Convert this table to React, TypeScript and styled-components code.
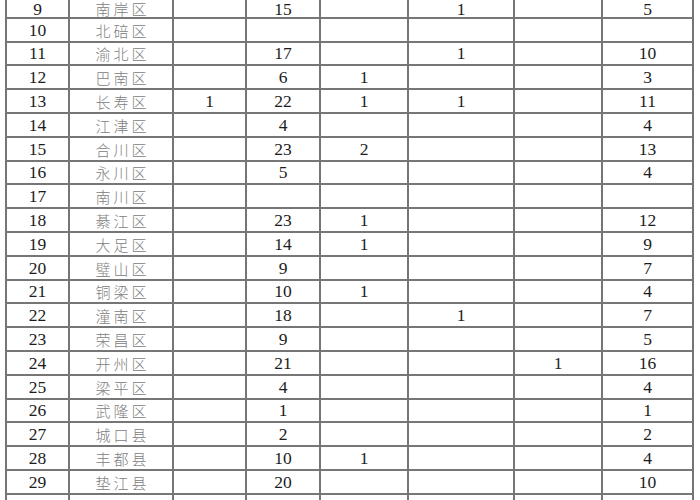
import styled, { createGlobalStyle } from 'styled-components';

/* Data */
type Row = [number, string, ...(number | null)[]];

const ROWS: Row[] = [
    [9,  '南岸区', null, 15, null, 1,    null, 5],
    [10, '北碚区', null, null, null, null, null, null],
    [11, '渝北区', null, 17, null, 1,    null, 10],
    [12, '巴南区', null, 6,  1,    null, null, 3],
    [13, '长寿区', 1,    22, 1,    1,    null, 11],
    [14, '江津区', null, 4,  null, null, null, 4],
    [15, '合川区', null, 23, 2,    null, null, 13],
    [16, '永川区', null, 5,  null, null, null, 4],
    [17, '南川区', null, null, null, null, null, null],
    [18, '綦江区', null, 23, 1,    null, null, 12],
    [19, '大足区', null, 14, 1,    null, null, 9],
    [20, '璧山区', null, 9,  null, null, null, 7],
    [21, '铜梁区', null, 10, 1,    null, null, 4],
    [22, '潼南区', null, 18, null, 1,    null, 7],
    [23, '荣昌区', null, 9,  null, null, null, 5],
    [24, '开州区', null, 21, null, null, 1,    16],
    [25, '梁平区', null, 4,  null, null, null, 4],
    [26, '武隆区', null, 1,  null, null, null, 1],
    [27, '城口县', null, 2,  null, null, null, 2],
    [28, '丰都县', null, 10, 1,    null, null, 4],
    [29, '垫江县', null, 20, null, null, null, 10],
    [30, '',       null, null, null, null, null, null],
];

const COL_WIDTHS = [63, 104, 73, 74, 88, 106, 88, 91];

export default function App() {
    return (
        <>
            <GlobalStyle />
            <Page>
                <Table>
                    <colgroup>
                        {COL_WIDTHS.map((w, i) => <col key = { i } style = {{ width: w }} />)}
                    </colgroup>
                    <tbody>
                        {ROWS.map(([no, name, ...counts], r) => (
                            <Row key = { no } $lead = { r === 0 }>
                                <NumCell>{no === 30 ? '' : no}</NumCell>
                                <NameCell>{name}</NameCell>
                                {counts.map((c, i) => <NumCell key = { i }>{c ?? ''}</NumCell>)}
                            </Row>
                        ))}
                    </tbody>
                </Table>
            </Page>
        </>
    );
}

/* Styles */
const GlobalStyle = createGlobalStyle`
  html, body { margin: 0; padding: 0; background: #fff; overflow: hidden; }
`;

const Page = styled.div`
  width: 700px;
  height: 500px;
  overflow: hidden;
  padding-left: 5px;
  box-sizing: border-box;
`;

const Table = styled.table`
  margin-top: -7px;
  width: 689px;
  table-layout: fixed;
  border-collapse: collapse;
`;

const Row = styled.tr<{ $lead?: boolean }>`
  height: 23.8px;

  & > td {
    vertical-align: ${ (p) => (p.$lead ? 'bottom' : 'middle') };
    line-height: ${ (p) => (p.$lead ? 14 : 19) }px;
    padding-bottom: ${ (p) => (p.$lead ? 1 : 0) }px;
  }
`;

const Cell = styled.td`
  border: 2px solid #767676;
  padding: 1px 0 0;
  text-align: center;
  white-space: nowrap;
`;

const NumCell = styled(Cell)`
  font-family: "Liberation Serif", "Times New Roman", serif;
  font-size: 17.5px;
  color: #1c1c1c;
`;

const NameCell = styled(Cell)`
  font-family: "Noto Sans CJK SC", "Noto Sans", sans-serif;
  font-weight: 300;
  font-size: 15px;
  letter-spacing: 3px;
  padding-left: 3px;
  color: #808080;
`;
